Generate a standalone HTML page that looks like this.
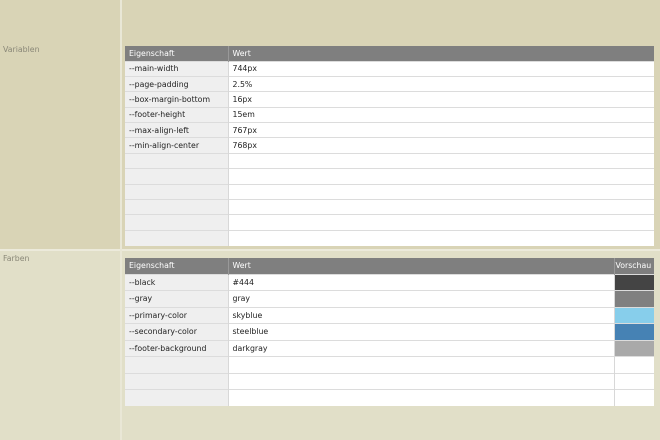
<!DOCTYPE html>
<html><head><meta charset="utf-8"><style>
*{margin:0;padding:0;box-sizing:border-box}
body{width:660px;height:440px;overflow:hidden;font-family:"DejaVu Sans","Liberation Sans",sans-serif;position:relative;background:#e1dfc8}
.sec{position:absolute;left:0;width:660px}
#s1{top:0;height:249px;background:#d9d4b6}
#s2{top:251px;height:189px;background:#e1dfc8}
#hl{position:absolute;top:249px;left:0;width:660px;height:2px;background:#eceadb}
#vl{position:absolute;top:0;left:120px;width:2px;height:440px;background:#e9e7d6}
.lbl{position:absolute;left:3px;font-size:7.8px;color:#8a8878}
table{position:absolute;left:125px;width:529px;border-collapse:collapse;font-size:7.8px;color:#222;table-layout:fixed}
th{background:#7f7f7f;color:#fff;font-weight:normal;text-align:left;padding:0 4px;height:15px;border-left:1px solid #999}
td{background:#fff;padding:0 4px;border-top:1px solid #dcdcdc;border-left:1px solid #d8d8d8;white-space:nowrap;overflow:hidden}
td.k{background:#efefef;border-left:none}
#t1 td{height:15.4px}
#t2 td{height:16.5px}
#t2 th{height:16px}
</style></head><body>
<div class="sec" id="s1"></div>
<div class="sec" id="s2"></div>
<div id="hl"></div><div id="vl"></div>
<div class="lbl" style="top:45px">Variablen</div>
<div class="lbl" style="top:254px">Farben</div>
<table id="t1" style="top:46px">
<colgroup><col style="width:103px"><col></colgroup>
<tr><th style="border-left:none">Eigenschaft</th><th>Wert</th></tr>
<tr><td class="k">--main-width</td><td>744px</td></tr>
<tr><td class="k">--page-padding</td><td>2.5%</td></tr>
<tr><td class="k">--box-margin-bottom</td><td>16px</td></tr>
<tr><td class="k">--footer-height</td><td>15em</td></tr>
<tr><td class="k">--max-align-left</td><td>767px</td></tr>
<tr><td class="k">--min-align-center</td><td>768px</td></tr>
<tr><td class="k"></td><td></td></tr>
<tr><td class="k"></td><td></td></tr>
<tr><td class="k"></td><td></td></tr>
<tr><td class="k"></td><td></td></tr>
<tr><td class="k"></td><td></td></tr>
<tr><td class="k"></td><td></td></tr>
</table>
<table id="t2" style="top:258px">
<colgroup><col style="width:103px"><col><col style="width:40px"></colgroup>
<tr><th style="border-left:none">Eigenschaft</th><th>Wert</th><th style="padding:0 1px">Vorschau</th></tr>
<tr><td class="k">--black</td><td>#444</td><td style="background:#444"></td></tr>
<tr><td class="k">--gray</td><td>gray</td><td style="background:#808080"></td></tr>
<tr><td class="k">--primary-color</td><td>skyblue</td><td style="background:#87ceeb"></td></tr>
<tr><td class="k">--secondary-color</td><td>steelblue</td><td style="background:#4682b4"></td></tr>
<tr><td class="k">--footer-background</td><td>darkgray</td><td style="background:#a9a9a9"></td></tr>
<tr><td class="k"></td><td></td><td></td></tr>
<tr><td class="k"></td><td></td><td></td></tr>
<tr><td class="k"></td><td></td><td></td></tr>
</table>
</body></html>
